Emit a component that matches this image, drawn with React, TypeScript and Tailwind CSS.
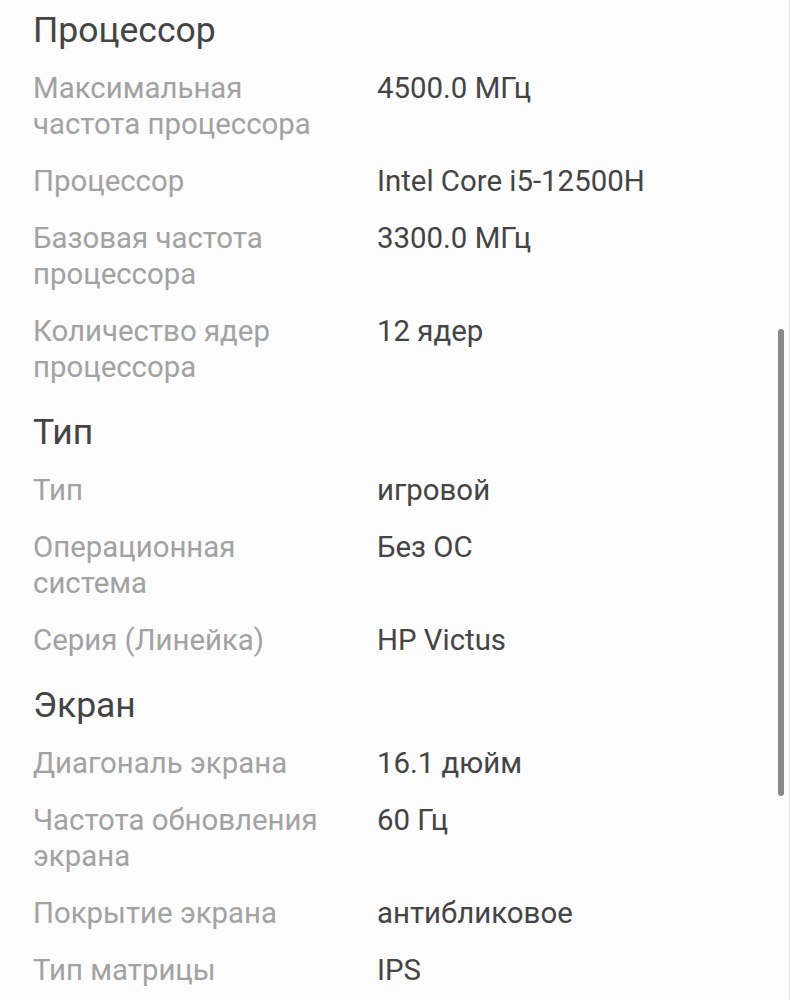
type Row = { label: string[]; value: string };
type Section = { title: string; rows: Row[] };

const sections: Section[] = [
  {
    title: "Процессор",
    rows: [
      { label: ["Максимальная", "частота процессора"], value: "4500.0 МГц" },
      { label: ["Процессор"], value: "Intel Core i5-12500H" },
      { label: ["Базовая частота", "процессора"], value: "3300.0 МГц" },
      { label: ["Количество ядер", "процессора"], value: "12 ядер" },
    ],
  },
  {
    title: "Тип",
    rows: [
      { label: ["Тип"], value: "игровой" },
      { label: ["Операционная", "система"], value: "Без ОС" },
      { label: ["Серия (Линейка)"], value: "HP Victus" },
    ],
  },
  {
    title: "Экран",
    rows: [
      { label: ["Диагональ экрана"], value: "16.1 дюйм" },
      { label: ["Частота обновления", "экрана"], value: "60 Гц" },
      { label: ["Покрытие экрана"], value: "антибликовое" },
      { label: ["Тип матрицы"], value: "IPS" },
    ],
  },
];

export default function App() {
  return (
    <div className="relative h-[1000px] w-[790px] overflow-hidden bg-[#fcfcfc] font-['Roboto',sans-serif]">
      <div className="pl-[33px] pt-[8px]">
        {sections.map((section, si) => (
          <div key={section.title} className={si === 0 ? "" : "mt-[25px]"}>
            <h2 className="text-[35.5px] leading-[44px] text-[#444444]">{section.title}</h2>
            {section.rows.map((row, ri) => (
              <div
                key={row.value}
                className={`flex text-[29.4px] leading-[36px] ${ri === 0 ? "mt-[18px]" : "mt-[21px]"}`}
              >
                <div className="w-[344px] shrink-0 text-[#a2a2a2]">
                  {row.label.map((l) => (
                    <div key={l}>{l}</div>
                  ))}
                </div>
                <div className="text-[#444444]">{row.value}</div>
              </div>
            ))}
          </div>
        ))}
      </div>

      {/* полоса прокрутки */}
      <div className="absolute left-[778px] top-[329px] h-[467px] w-[6px] rounded-full bg-[#888888]" />
      <div className="absolute right-0 top-0 h-full w-px bg-[#dddddd]" />
    </div>
  );
}
